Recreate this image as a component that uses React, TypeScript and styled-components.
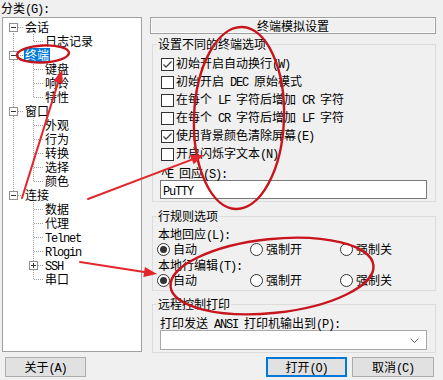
import React from 'react'
import styled, { createGlobalStyle } from 'styled-components'

const GlobalStyle = createGlobalStyle`
  html, body {
    margin: 0;
    padding: 0;
    background: #f0f0f0;
  }
  body {
    font-family: "Noto Sans CJK SC", "Noto Sans", sans-serif;
    font-size: 12px;
    color: #000;
  }
`

// half-width latin runs, SimSun style 6px advance
const M = styled.span`
  font-family: "Liberation Mono", monospace;
  font-size: 12px;
  letter-spacing: -1.2px;
`

const Window = styled.div`
  position: relative;
  width: 443px;
  height: 380px;
  overflow: hidden;
  background: #f0f0f0;
  display: flex;
  flex-direction: column;
  line-height: 14px;
`

const Main = styled.div`
  display: flex;
  gap: 8px;
  height: 352px;
  flex: none;
`

const LeftCol = styled.div`
  width: 140px;
  margin-left: 2px;
  display: flex;
  flex-direction: column;
`

const CategoryLabel = styled.div`
  height: 16px;
  padding-top: 1px;
  margin-left: -1px;
  white-space: nowrap;
`

const Tree = styled.div`
  flex: 1;
  box-sizing: border-box;
  background: #fff;
  border: 1px solid #a0a0a0;
  padding-top: 2px;
`

const TreeRow = styled.div`
  display: flex;
  align-items: center;
  height: 14px;
`

const GutterSvg = styled.svg`
  display: block;
  flex: none;
  stroke: #a0a0a0;
  shape-rendering: crispEdges;
`

const TreeLabel = styled.span<{ $selected?: boolean }>`
  margin-left: 1px;
  padding: 0 1px;
  height: 14px;
  line-height: 14px;
  white-space: nowrap;
  background: ${p => (p.$selected ? '#0078d7' : 'transparent')};
  color: ${p => (p.$selected ? '#fff' : '#000')};
`

const RightCol = styled.div`
  width: 286px;
  padding-top: 17px;
  display: flex;
  flex-direction: column;
`

const PanelTitle = styled.div`
  height: 17px;
  box-sizing: border-box;
  border: 1px solid #a0a0a0;
  box-shadow: inset 0 0 0 1px #fbfbfb;
  text-align: center;
  line-height: 15px;
`

const Group = styled.fieldset<{ $mt: number }>`
  margin: ${p => p.$mt}px 0 0 2px;
  padding: 0 9px 2px 4px;
  border: 1px solid #dcdcdc;
  min-inline-size: 0;
`

const GroupTitle = styled.legend`
  padding: 0 1px;
  height: 14px;
  line-height: 14px;
`

const CheckList = styled.div`
  margin-top: 4px;
  padding-left: 4px;
  display: flex;
  flex-direction: column;
`

const CheckRow = styled.label`
  display: flex;
  align-items: center;
  gap: 2px;
  height: 18px;
  white-space: nowrap;
`

const Box = styled.span`
  width: 13px;
  height: 13px;
  box-sizing: border-box;
  border: 1px solid #333;
  background: #fff;
  flex: none;
  display: flex;
  align-items: center;
  justify-content: center;
`

const FieldLabel = styled.div<{ $mt: number; $ml: number }>`
  margin-top: ${p => p.$mt}px;
  margin-left: ${p => p.$ml}px;
  height: 14px;
  white-space: nowrap;
`

const TextInput = styled.div`
  margin-left: 3px;
  width: 267px;
  height: 19px;
  box-sizing: border-box;
  border: 1px solid #7a7a7a;
  background: #fff;
  padding-left: 2px;
  line-height: 17px;
`

const RadioRow = styled.div`
  display: grid;
  grid-template-columns: 93px 90px 1fr;
  height: 16px;
  align-items: center;
`

const RadioItem = styled.label`
  display: flex;
  align-items: center;
  gap: 3px;
  white-space: nowrap;
`

const Circle = styled.span<{ $on?: boolean }>`
  width: 13px;
  height: 13px;
  box-sizing: border-box;
  border-radius: 50%;
  border: 1px solid #333;
  background: #fff;
  flex: none;
  display: flex;
  align-items: center;
  justify-content: center;

  &::after {
    content: '';
    width: 7px;
    height: 7px;
    border-radius: 50%;
    background: ${p => (p.$on ? '#333' : 'transparent')};
  }
`

const Combo = styled.div`
  margin-left: 3px;
  width: 267px;
  height: 20px;
  box-sizing: border-box;
  border: 1px solid #a8a8a8;
  background: #fff;
  display: flex;
  align-items: center;
  justify-content: flex-end;
  padding-right: 7px;
`

const Footer = styled.div`
  display: flex;
  align-items: flex-start;
  gap: 5px;
  padding: 5px 9px 0 5px;
`

const Button = styled.div<{ $default?: boolean; $w: number }>`
  width: ${p => p.$w}px;
  height: 20px;
  box-sizing: border-box;
  background: #e1e1e1;
  border: 1px solid ${p => (p.$default ? '#0078d7' : '#adadad')};
  box-shadow: ${p => (p.$default ? 'inset 0 0 0 1px #0078d7' : 'none')};
  text-align: center;
  line-height: 18px;
  white-space: nowrap;

  &:nth-child(2) {
    margin-left: auto;
  }
`

const Annotations = styled.svg`
  position: absolute;
  left: 0;
  top: 0;
  pointer-events: none;
`

type VLine = 'none' | 'full' | 'top' | 'bottom'

function Gutter({ v, h, box }: { v: VLine; h?: boolean; box?: 'minus' | 'plus' }) {
  return (
    <GutterSvg width={20} height={14} viewBox="0 0 20 14">
      <g strokeDasharray="1 1">
        {v === 'full' && <line x1={10.5} y1={0} x2={10.5} y2={14} />}
        {v === 'top' && <line x1={10.5} y1={0} x2={10.5} y2={8} />}
        {v === 'bottom' && <line x1={10.5} y1={7} x2={10.5} y2={14} />}
        {h && <line x1={box ? 15 : 11} y1={7.5} x2={20} y2={7.5} />}
      </g>
      {box && (
        <g>
          <rect x={6.5} y={3.5} width={8} height={8} fill="#fff" stroke="#919191" />
          <line x1={8} y1={7.5} x2={13} y2={7.5} stroke="#333" />
          {box === 'plus' && <line x1={10.5} y1={5} x2={10.5} y2={10} stroke="#333" />}
        </g>
      )}
    </GutterSvg>
  )
}

type Branch = { label: React.ReactNode; selected?: boolean; children: { label: React.ReactNode; box?: 'plus' }[] }

const tree: Branch[] = [
  { label: '会话', children: [{ label: '日志记录' }] },
  { label: '终端', selected: true, children: [{ label: '键盘' }, { label: '响铃' }, { label: '特性' }] },
  {
    label: '窗口',
    children: [{ label: '外观' }, { label: '行为' }, { label: '转换' }, { label: '选择' }, { label: '颜色' }],
  },
  {
    label: '连接',
    children: [
      { label: '数据' },
      { label: '代理' },
      { label: <M>Telnet</M> },
      { label: <M>Rlogin</M> },
      { label: <M>SSH</M>, box: 'plus' },
      { label: '串口' },
    ],
  },
]

function CheckMark() {
  return (
    <svg width={11} height={11} viewBox="0 0 11 11">
      <path d="M1.5 5.5 L4 8 L9.5 2.5" fill="none" stroke="#444" strokeWidth={1.3} />
    </svg>
  )
}

function Check({ on, children }: { on?: boolean; children: React.ReactNode }) {
  return (
    <CheckRow>
      <Box>{on && <CheckMark />}</Box>
      <span>{children}</span>
    </CheckRow>
  )
}

function Radios({ on }: { on: number }) {
  const labels = ['自动', '强制开', '强制关']
  return (
    <RadioRow>
      {labels.map((l, i) => (
        <RadioItem key={l}>
          <Circle $on={i === on} />
          <span>{l}</span>
        </RadioItem>
      ))}
    </RadioRow>
  )
}

function arrowHead(sx: number, sy: number, tx: number, ty: number, len = 13, half = 5) {
  const d = Math.hypot(tx - sx, ty - sy)
  const ux = (tx - sx) / d
  const uy = (ty - sy) / d
  const bx = tx - ux * len
  const by = ty - uy * len
  const pts = `${tx},${ty} ${bx - uy * half},${by + ux * half} ${bx + uy * half},${by - ux * half}`
  return { bx, by, pts }
}

function Arrow({ sx, sy, tx, ty }: { sx: number; sy: number; tx: number; ty: number }) {
  const { bx, by, pts } = arrowHead(sx, sy, tx, ty)
  return (
    <g>
      <line x1={sx} y1={sy} x2={bx} y2={by} stroke="#e3262c" strokeWidth={2} strokeLinecap="round" />
      <polygon points={pts} fill="#e3262c" />
    </g>
  )
}

export default function App() {
  return (
    <>
      <GlobalStyle />
      <Window>
        <Main>
          <LeftCol>
            <CategoryLabel>
              分类<M>(G):</M>
            </CategoryLabel>
            <Tree>
              {tree.map((b, bi) => {
                const lastRoot = bi === tree.length - 1
                return (
                  <React.Fragment key={bi}>
                    <TreeRow>
                      <Gutter v={bi === 0 ? 'bottom' : lastRoot ? 'top' : 'full'} h box="minus" />
                      <TreeLabel $selected={b.selected}>{b.label}</TreeLabel>
                    </TreeRow>
                    {b.children.map((c, ci) => (
                      <TreeRow key={ci}>
                        <Gutter v={lastRoot ? 'none' : 'full'} />
                        <Gutter v={ci === b.children.length - 1 ? 'top' : 'full'} h box={c.box} />
                        <TreeLabel>{c.label}</TreeLabel>
                      </TreeRow>
                    ))}
                  </React.Fragment>
                )
              })}
            </Tree>
          </LeftCol>

          <RightCol>
            <PanelTitle>终端模拟设置</PanelTitle>

            <Group $mt={3}>
              <GroupTitle>设置不同的终端选项</GroupTitle>
              <CheckList>
                <Check on>
                  初始开启自动换行<M>(W)</M>
                </Check>
                <Check>
                  初始开启<M> DEC </M>原始模式
                </Check>
                <Check>
                  在每个<M> LF </M>字符后增加<M> CR </M>字符
                </Check>
                <Check>
                  在每个<M> CR </M>字符后增加<M> LF </M>字符
                </Check>
                <Check on>
                  使用背景颜色清除屏幕<M>(E)</M>
                </Check>
                <Check>
                  开启闪烁字文本<M>(N)</M>
                </Check>
              </CheckList>
              <FieldLabel $mt={3} $ml={4}>
                <M>^E </M>回应<M>(S):</M>
              </FieldLabel>
              <TextInput>
                <M>PuTTY</M>
              </TextInput>
            </Group>

            <Group $mt={7}>
              <GroupTitle>行规则选项</GroupTitle>
              <FieldLabel $mt={4} $ml={1}>
                本地回应<M>(L):</M>
              </FieldLabel>
              <Radios on={0} />
              <FieldLabel $mt={1} $ml={1}>
                本地行编辑<M>(T):</M>
              </FieldLabel>
              <Radios on={0} />
            </Group>

            <Group $mt={6}>
              <GroupTitle>远程控制打印</GroupTitle>
              <FieldLabel $mt={5} $ml={3}>
                打印发送<M> ANSI </M>打印机输出到<M>(P):</M>
              </FieldLabel>
              <Combo>
                <svg width={9} height={5} viewBox="0 0 9 5">
                  <path d="M0.5 0.5 L4.5 4.5 L8.5 0.5" fill="none" stroke="#606060" />
                </svg>
              </Combo>
            </Group>
          </RightCol>
        </Main>

        <Footer>
          <Button $w={81}>
            关于<M>(A)</M>
          </Button>
          <Button $w={81} $default>
            打开<M>(O)</M>
          </Button>
          <Button $w={82}>
            取消<M>(C)</M>
          </Button>
        </Footer>

        <Annotations width={443} height={380} viewBox="0 0 443 380">
          <g fill="none" stroke="#c8141c" strokeWidth={2.4}>
            <ellipse cx={43} cy={54} rx={26} ry={8.5} transform="rotate(-3 43 54)" />
            <ellipse cx={239} cy={118} rx={45} ry={91} transform="rotate(2 239 118)" />
            <ellipse cx={272} cy={276} rx={102} ry={37} transform="rotate(-6 272 276)" />
          </g>
          <Arrow sx={22} sy={198} tx={62} ty={70} />
          <Arrow sx={88} sy={199} tx={204} ty={155} />
          <Arrow sx={80} sy={262} tx={157} ty={274} />
        </Annotations>
      </Window>
    </>
  )
}
